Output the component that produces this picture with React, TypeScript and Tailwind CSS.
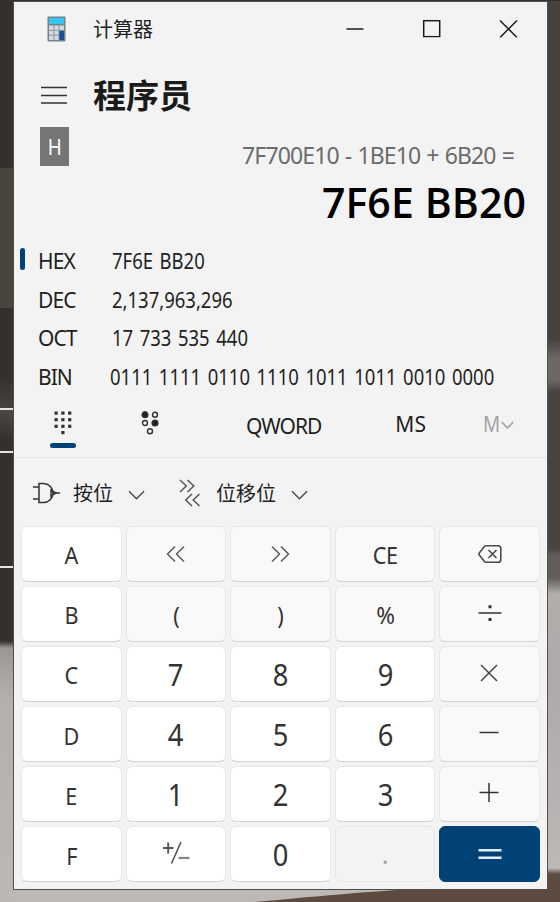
import { useState } from 'react';
import type { ReactNode } from 'react';

type Tone = 'light' | 'soft' | 'disabled' | 'accent';

interface Key {
  id: string;
  tone: Tone;
  face: ReactNode;
}

const toneClass: Record<Tone, string> = {
  light: 'bg-white border-[#e9e9e9] border-b-[#d2d2d2] text-[#333333]',
  soft: 'bg-[#f9f9f9] border-[#e8e8e8] border-b-[#d2d2d2] text-[#333333]',
  disabled: 'bg-[#f3f3f3] border-[#e7e7e7] text-[#a0a0a0]',
  accent: 'bg-[#004275] border-[#004275] text-[#e4edf4]',
};

const Chevrons = ({ flip }: { flip?: boolean }) => (
  <svg width="20" height="18" viewBox="0 0 20 18" fill="none" stroke="#5a5a5a" strokeWidth="1.5" className={flip ? '-scale-x-100' : ''}>
    <path d="M9 1.5 1.5 9 9 16.5M18 1.5 10.5 9 18 16.5" />
  </svg>
);

const ChevronDown = ({ small }: { small?: boolean }) => (
  <svg width={small ? 13 : 17} height={small ? 8 : 10} viewBox="0 0 17 10" fill="none" stroke={small ? '#a3a3a3' : '#4b4b4b'} strokeWidth={small ? 2 : 1.5}>
    <path d="M1 1.2 8.5 8.7 16 1.2" />
  </svg>
);

const letter = (s: string) => <span className="text-[23px] tracking-[-0.5px] scale-x-[.94] translate-y-[2px]">{s}</span>;
const digit = (s: string) => <span className="text-[30px] scale-x-[.91] translate-y-px">{s}</span>;

const keys: Key[] = [
  { id: 'a', tone: 'light', face: letter('A') },
  { id: 'shl', tone: 'soft', face: <Chevrons /> },
  { id: 'shr', tone: 'soft', face: <Chevrons flip /> },
  { id: 'ce', tone: 'soft', face: letter('CE') },
  {
    id: 'back', tone: 'soft', face: (
      <svg width="24" height="20" viewBox="0 0 24 20" fill="none" stroke="#4a4a4a" strokeWidth="1.6">
        <path d="M8.2 1.8H20a2.8 2.8 0 0 1 2.8 2.8v10.8a2.8 2.8 0 0 1-2.8 2.8H8.2c-.8 0-1.5-.3-2-.9L1.5 11.3a1.9 1.9 0 0 1 0-2.6l4.7-6c.5-.6 1.2-.9 2-.9z" />
        <path d="m10.5 6 8 8M18.5 6l-8 8" />
      </svg>
    ),
  },
  { id: 'b', tone: 'light', face: letter('B') },
  { id: 'open', tone: 'soft', face: letter('(') },
  { id: 'close', tone: 'soft', face: letter(')') },
  { id: 'mod', tone: 'soft', face: <span className="text-[23px] scale-x-[.98] translate-y-[2px]">%</span> },
  {
    id: 'div', tone: 'soft', face: (
      <svg width="24" height="20" viewBox="0 0 24 20" fill="#333" className="-translate-y-px">
        <path d="M.5 9.2h23v1.5H.5zM10.5 2.2h3v3h-3zM10.5 15h3v3h-3z" />
      </svg>
    ),
  },
  { id: 'c', tone: 'light', face: letter('C') },
  { id: '7', tone: 'light', face: digit('7') },
  { id: '8', tone: 'light', face: digit('8') },
  { id: '9', tone: 'light', face: digit('9') },
  {
    id: 'mul', tone: 'soft', face: (
      <svg width="18" height="18" viewBox="0 0 18 18" stroke="#444" strokeWidth="1.5" className="-translate-x-px -translate-y-px">
        <path d="m1 1 16 16M17 1 1 17" />
      </svg>
    ),
  },
  { id: 'd', tone: 'light', face: letter('D') },
  { id: '4', tone: 'light', face: digit('4') },
  { id: '5', tone: 'light', face: digit('5') },
  { id: '6', tone: 'light', face: digit('6') },
  {
    id: 'sub', tone: 'soft', face: (
      <svg width="20" height="20" viewBox="0 0 20 20" stroke="#333" strokeWidth="1.5" className="-translate-x-px -translate-y-px">
        <path d="M.5 9.5h19" />
      </svg>
    ),
  },
  { id: 'e', tone: 'light', face: letter('E') },
  { id: '1', tone: 'light', face: digit('1') },
  { id: '2', tone: 'light', face: digit('2') },
  { id: '3', tone: 'light', face: digit('3') },
  {
    id: 'add', tone: 'soft', face: (
      <svg width="20" height="20" viewBox="0 0 20 20" stroke="#333" strokeWidth="1.5" className="-translate-x-px -translate-y-px">
        <path d="M.5 9.5h19M10 0v19" />
      </svg>
    ),
  },
  { id: 'f', tone: 'light', face: letter('F') },
  {
    id: 'neg', tone: 'light', face: (
      <svg width="28" height="24" viewBox="0 0 28 24" fill="none" stroke="#555" className="-translate-y-px">
        <path d="M1 7h10.5M6.2 1.5v11" strokeWidth="1.9" />
        <path d="M19 1 9.5 22.5" strokeWidth="1.6" />
        <path d="M16.5 17h11" strokeWidth="2.2" stroke="#888" />
      </svg>
    ),
  },
  { id: '0', tone: 'light', face: digit('0') },
  { id: 'dot', tone: 'disabled', face: <span className="text-[25px]">.</span> },
  {
    id: 'eq', tone: 'accent', face: (
      <svg width="24" height="14" viewBox="0 0 24 14" fill="currentColor">
        <path d="M.5 2h23v2.600H.5zM.5 9.400h23V12H.5z" />
      </svg>
    ),
  },
];

const radixes = [
  { name: 'HEX', value: '7F6E BB20' },
  { name: 'DEC', value: '2,137,963,296' },
  { name: 'OCT', value: '17 733 535 440' },
  { name: 'BIN', value: '0111 1111 0110 1110 1011 1011 0010 0000' },
];

function CalcIcon() {
  return (
    <svg width="19" height="26" viewBox="0 0 19 26">
      <rect x=".5" y=".5" width="18" height="25" rx="1" fill="#74818d" />
      <rect x="2" y="2" width="15" height="6" fill="#37c6f2" />
      <rect x="2" y="9.5" width="15" height="14.5" fill="#d3d9de" />
      <path d="M7 9.5V24M12 9.5V24M2 14.3h15M2 19.2h15" stroke="#8b97a2" />
      <rect x="12.3" y="14.8" width="4.7" height="9.2" fill="#134f91" />
    </svg>
  );
}

function Wallpaper() {
  return (
    <div className="absolute inset-0 flex justify-between bg-[#bdb8b4]">
      <div className="w-[14px] bg-[linear-gradient(180deg,#35302c_0,#35302c_168px,#4a443f_168px,#4a443f_308px,#35302c_308px,#35302c_375px,#45403d_408px,#e4e4e4_408px,#e4e4e4_410px,#4d4846_410px,#35302c_440px,#35302c_451px,#e4e4e4_451px,#e4e4e4_453px,#35302c_453px,#35302c_566px,#e4e4e4_566px,#e4e4e4_568px,#35302c_568px,#35302c_641px,#9b9593_648px,#b5b0ad_700px,#bdb8b4_902px)]" />
      <div className="w-[14px] bg-[linear-gradient(180deg,#48413c_0,#48413c_340px,#6e6764_358px,#6e6764_380px,#4a433e_392px,#4a433e_548px,#645d5b_556px,#645d5b_578px,#b3aeaa_594px,#aea9ab_680px,#b5b0b1_780px,#bdb9b4_868px,#5e4b40_874px,#5e4b40_902px)]" />
      <svg className="absolute left-0 bottom-0" width="560" height="14" viewBox="0 0 560 14">
        <path d="M255 14C310 9 360 4 430 0H560V14Z" fill="#5e4b40" />
      </svg>
    </div>
  );
}

export default function App() {
  const [radix, setRadix] = useState('HEX');

  return (
    <div className="relative w-[560px] h-[902px] overflow-hidden bg-[#35302c] font-['Noto_Sans','Noto_Sans_CJK_SC',sans-serif] text-[#1f1f1f]">
      <Wallpaper />
      <div className="relative pl-[13px]">
        <div className="h-px bg-[#35302c] -ml-[13px]" />
        <main className="w-[535px] h-[889px] border border-[#4f4f4f] bg-[#f3f3f3] flex flex-col">
          <header className="h-[54px] shrink-0 flex items-center pl-[33px] pr-[29px]">
            <CalcIcon />
            <span className="ml-[27px] mt-[2px] text-[20px] leading-none">计算器</span>
            <svg className="ml-auto -translate-y-[0.5px]" width="172" height="18" viewBox="0 0 172 18" fill="none" stroke="#1b1b1b" strokeWidth="1.5">
              <path d="M.5 9.5H17.5" />
              <rect x="77.7" y="1.2" width="16" height="16" />
              <path d="m154 1 17 17M171 1l-17 17" />
            </svg>
          </header>

          <div className="h-[71px] shrink-0 flex items-start pl-[27px]">
            <svg className="mt-[30px]" width="26" height="20" viewBox="0 0 26 20" stroke="#333" strokeWidth="1.5">
              <path d="M0 1.5h26M0 9.5h26M0 17h26" />
            </svg>
            <h1 className="ml-[26px] mt-[23px] text-[33px] leading-[34px] font-bold text-[#1b1b1b]">程序员</h1>
          </div>

          <div className="h-[47px] shrink-0 flex pl-[26px] pr-[33px] justify-between">
            <div className="w-[29px] h-[39px] bg-[#767676] text-white text-[21px] flex items-center justify-center pt-[2px]">
              <span className="scale-x-[.9]">H</span>
            </div>
            <div className="pt-[13px] text-[23px] leading-[30px] tracking-[-0.88px] [word-spacing:1px] text-[#6b6b6b]">7F700E10 - 1BE10 + 6B20 =</div>
          </div>

          <div className="h-[68px] shrink-0 pr-[21px] text-right font-['Open_Sans'] text-[41px] leading-[56px] font-semibold tracking-[0.1px] text-black">7F6E BB20</div>

          <div className="shrink-0 pl-[6px]">
            {radixes.map(r => (
              <button key={r.name} onClick={() => setRadix(r.name)} className="h-[38.4px] w-full flex items-center text-[21px] text-left whitespace-nowrap">
                <span className={`w-[5px] h-[22px] rounded-full -translate-y-[2px] ${radix === r.name ? 'bg-[#004275]' : ''}`} />
                <span className="ml-[13px] w-[74px] tracking-[-0.9px] translate-y-[0.5px]">{r.name}</span>
                <span className="origin-left scale-x-[.88] translate-y-[0.5px] [word-spacing:2px]">{r.value}</span>
              </button>
            ))}
          </div>

          <div className="h-[62px] shrink-0 flex items-start border-b border-[#e6e6e6] pl-[36px] pr-[32px]">
            <div className="mt-[15px] w-[26px] flex flex-col items-center">
              <svg width="18" height="24" viewBox="0 0 18 24" fill="#333">
                {[0, 1, 2].map(row => [0, 1, 2].map(col => (
                  <rect key={`${row}${col}`} x={0.5 + col * 6.8} y={0.5 + row * 6.6} width="3.2" height="3.2" />
                )))}
                <rect x="7.3" y="20" width="3.2" height="3.2" />
              </svg>
              <div className="mt-[8px] w-[26px] h-[5px] rounded-full bg-[#004275]" />
            </div>
            <svg className="mt-[15px] ml-[65px]" width="18" height="24" viewBox="0 0 18 24" fill="none" stroke="#333" strokeWidth="1.4">
              <circle cx="4" cy="3.7" r="2.9" fill="#222" />
              <circle cx="14" cy="3.7" r="2.5" />
              <circle cx="4" cy="12" r="2.5" />
              <circle cx="14" cy="12" r="2.9" fill="#222" />
              <circle cx="9" cy="20.3" r="2.5" />
            </svg>
            <span className="ml-[87px] mt-[16px] text-[21px] leading-[28px] tracking-[-1px]">QWORD</span>
            <span className="ml-auto mr-[57px] mt-[14px] text-[21px] leading-[28px]">MS</span>
            <span className="mt-[14px] text-[21px] leading-[28px] text-[#a3a3a3] flex items-center">
              <span className="scale-x-[.9] -translate-x-px">M</span>
              <span className="mt-[2px] -translate-x-px"><ChevronDown small /></span>
            </span>
          </div>

          <div className="h-[68px] shrink-0 flex items-center pl-[19px] pt-[3px] text-[20px]">
            <svg width="27" height="22" viewBox="0 0 27 22" fill="none" stroke="#333" strokeWidth="1.5">
              <path d="M0 5h6M0 17h6M6 1.5h4.5a9.5 9.5 0 0 1 0 19H6zM18 8v6l5-3z" />
              <path d="M23 11h4" />
            </svg>
            <span className="ml-[13px] mt-[2px]">按位</span>
            <span className="ml-[15px] mt-[3px]"><ChevronDown /></span>
            <svg className="ml-[34px]" width="22" height="28" viewBox="0 0 22 28" fill="none" stroke="#555" strokeWidth="1.5">
              <path d="m1 1 6.3 6L1 13M8.5 1l6.3 6-6.3 6M13 15l-6.3 6 6.3 6M20.5 15l-6.3 6 6.3 6" />
            </svg>
            <span className="ml-[15px] mt-[2px]">位移位</span>
            <span className="ml-[15px] mt-[3px]"><ChevronDown /></span>
          </div>

          <div className="grid grid-cols-5 gap-[4px] px-[7px] h-[357px] shrink-0">
            {keys.map(k => (
              <button key={k.id} className={`h-[56px] rounded-[6px] border flex items-center justify-center leading-none ${toneClass[k.tone]}`}>
                {k.face}
              </button>
            ))}
          </div>
        </main>
      </div>
    </div>
  );
}
